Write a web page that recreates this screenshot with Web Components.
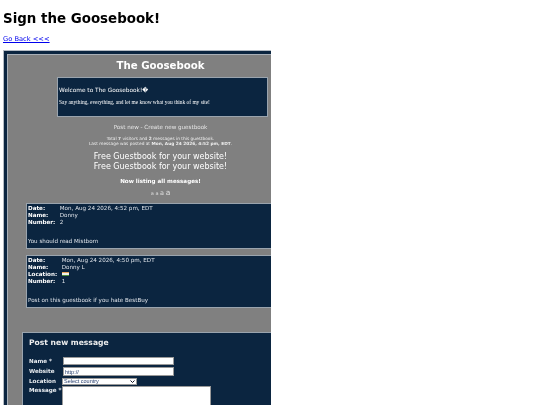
<!DOCTYPE html>
<html>
<head>
<meta charset="utf-8">
<title>Sign the Goosebook!</title>
<style>
  html, body { margin: 0; background: #fff; overflow: hidden; height: 405px; }
  body { padding: 11px 0 0 3px; box-sizing: border-box; font-family: "DejaVu Sans", sans-serif; filter: blur(.3px); }
</style>
</head>
<body>
<page-head></page-head>
<guest-frame>
  <book-banner></book-banner>
  <book-entry date="Mon, Aug 24 2026, 4:52 pm, EDT" name="Donny" number="2" message="You should read Mistborn"></book-entry>
  <book-entry date="Mon, Aug 24 2026, 4:50 pm, EDT" name="Donny L" number="1" location message="Post on this guestbook if you hate BestBuy"></book-entry>
  <post-form></post-form>
</guest-frame>

<template id="head-tpl">
  <style>
    :host { display: block; }
    h1 { margin: 0; font-size: 13.4px; line-height: 16px; font-weight: bold; color: #000; }
    a { display: block; margin-top: 8px; font-size: 6.7px; line-height: 9px; color: #0000ee; text-decoration: underline; }
  </style>
  <h1>Sign the Goosebook!</h1>
  <a href="#">Go Back &lt;&lt;&lt;</a>
</template>

<template id="frame-tpl">
  <style>
    :host { display: block; width: 268px; height: 355px; margin-top: 6px; box-sizing: border-box;
      background: #808080; border: 1px solid #b5bcc4; border-right: 0; border-bottom: 0; overflow: hidden; }
    .in { border-top: 3px solid #0b2540; border-left: 3px solid #0b2540; height: 100%; box-sizing: border-box; }
    .body { border-top: 1px solid #a9b0b8; border-left: 1px solid #a9b0b8; height: 100%; box-sizing: border-box; width: 306px; }
  </style>
  <div class="in"><div class="body"><slot></slot></div></div>
</template>

<template id="banner-tpl">
  <style>
    :host { display: block; color: #fff; text-align: center; font-size: 5px; }
    h2 { margin: 0; padding-top: 4px; font-size: 10.2px; line-height: 14px; font-weight: bold; }
    .welcome { box-sizing: border-box; width: 211px; height: 40px; margin: 4px 0 0 49px; background: #0b2540; border: 1px solid #9aa4ae;
      text-align: left; padding: 8px 0 0 1px; }
    .welcome p { margin: 0; font-size: 5.8px; line-height: 8px; font-weight: normal; }
    .welcome p + p { margin-top: 5px; font: 5.4px/7px "Liberation Serif", serif; }
    .links { margin-top: 6px; font-size: 5.6px; line-height: 8px; color: #e6e6e6; }
    .stats { margin-top: 5px; font-size: 4.3px; line-height: 5px; color: #eee; }
    .free { margin-top: 6px; font-size: 8px; line-height: 10px; }
    .now { margin-top: 5px; font-size: 5.6px; line-height: 8px; font-weight: bold; }
    .pages { margin-top: 4px; line-height: 8px; color: #ddd; }
    .pages span:nth-child(1), .pages span:nth-child(2) { font-size: 5px; }
    .pages span:nth-child(3) { font-size: 6.5px; }
    .pages span:nth-child(4) { font-size: 7.5px; }
  </style>
  <h2>The Goosebook</h2>
  <div class="welcome">
    <p>Welcome to The Goosebook!�</p>
    <p>Say anything, everything, and let me know what you think of my site!</p>
  </div>
  <div class="links">Post new - Create new guestbook</div>
  <div class="stats">Total <b>7</b> visitors and <b>2</b> messages in this guestbook.<br>Last message was posted at <b>Mon, Aug 24 2026, 4:52 pm, EDT</b>.</div>
  <div class="free">Free Guestbook for your website!<br>Free Guestbook for your website!</div>
  <div class="now">Now listing all messages!</div>
  <div class="pages"><span>a</span> <span>a</span> <span>a</span> <span>a</span></div>
</template>

<template id="entry-tpl">
  <style>
    :host { display: block; box-sizing: border-box; margin: 6px 0 0 18px; background: #0b2540; border: 1px solid #9aa4ae; border-right: 0;
      color: #dfe4ea; font-size: 5.6px; line-height: 7px; padding: 1px 0 3px 1px; }
    .grid { display: grid; grid-template-columns: max-content 1fr; column-gap: 4.5px; }
    b { color: #fff; }
    .flag { display: inline-block; width: 7px; height: 4px; background: linear-gradient(#e9a35a 0 33%, #f2f2ea 33% 66%, #4f8f3a 66%); vertical-align: 0; }
    .msg { margin-top: 12px; }
  </style>
  <div class="grid"></div>
  <div class="msg"></div>
</template>

<template id="form-tpl">
  <style>
    :host { display: block; box-sizing: border-box; margin: 24px 0 0 14px; background: #0b2540; border-top: 1px solid #9aa4ae; border-left: 1px solid #9aa4ae;
      color: #e8ecf0; height: 90px; padding: 4px 0 0 6px; }
    h3 { margin: 0; font-size: 7.6px; line-height: 12px; color: #eee; }
    form { display: grid; grid-template-columns: 34px 1fr; row-gap: 2px; margin-top: 8px; font-size: 5.6px; font-weight: bold; }
    label { line-height: 8px; }
    label.up { margin-top: -1px; }
    input, select, textarea { box-sizing: border-box; display: block; margin: 0; border-radius: 0; font: 5.5px "Liberation Sans", sans-serif; color: #223a6a; background-color: #fff; }
    input { width: 111px; height: 8px; border: 1px solid #999; padding: 0 1px; }
    input + label + input { height: 9px; }
    select { width: 75px; height: 7px; margin-left: -1px; border: 1px solid #999; padding: 0 0 0 1px; line-height: 5px;
      appearance: none; -webkit-appearance: none;
      background-image: url("data:image/svg+xml,%3Csvg xmlns='http://www.w3.org/2000/svg' width='5' height='3'%3E%3Cpath d='M.5.5 2.5 2.5 4.5.5' fill='none' stroke='%23112' stroke-width='1'/%3E%3C/svg%3E");
      background-repeat: no-repeat; background-position: right 1px center; }
    textarea { width: 149px; height: 30px; margin: -1px 0 0 -1px; border: 1px solid #999; padding: 0; resize: none; }
  </style>
  <h3>Post new message</h3>
  <form>
    <label>Name *</label><input type="text">
    <label>Website</label><input type="text" value="http://">
    <label class="up">Location</label><select><option>Select country</option></select>
    <label class="up">Message *</label><textarea></textarea>
  </form>
</template>

<script>
function open (el, id) {
  const root = el.attachShadow({ mode: 'open' })
  root.appendChild(document.getElementById(id).content.cloneNode(true))
  return root
}

class PageHead extends HTMLElement {
  constructor () { super(); open(this, 'head-tpl') }
}
class GuestFrame extends HTMLElement {
  constructor () { super(); open(this, 'frame-tpl') }
}
class BookBanner extends HTMLElement {
  constructor () { super(); open(this, 'banner-tpl') }
}
class PostForm extends HTMLElement {
  constructor () { super(); open(this, 'form-tpl') }
}
class BookEntry extends HTMLElement {
  constructor () { super(); this.root = open(this, 'entry-tpl') }

  connectedCallback () {
    let rows = `<b>Date:</b><span>${this.getAttribute('date')}</span><b>Name:</b><span>${this.getAttribute('name')}</span>`
    if (this.hasAttribute('location')) rows += '<b>Location:</b><span><i class="flag"></i></span>'
    rows += `<b>Number:</b><span>${this.getAttribute('number')}</span>`
    this.root.querySelector('.grid').innerHTML = rows
    this.root.querySelector('.msg').textContent = this.getAttribute('message')
  }
}

customElements.define('page-head', PageHead)
customElements.define('guest-frame', GuestFrame)
customElements.define('book-banner', BookBanner)
customElements.define('book-entry', BookEntry)
customElements.define('post-form', PostForm)
</script>
</body>
</html>
